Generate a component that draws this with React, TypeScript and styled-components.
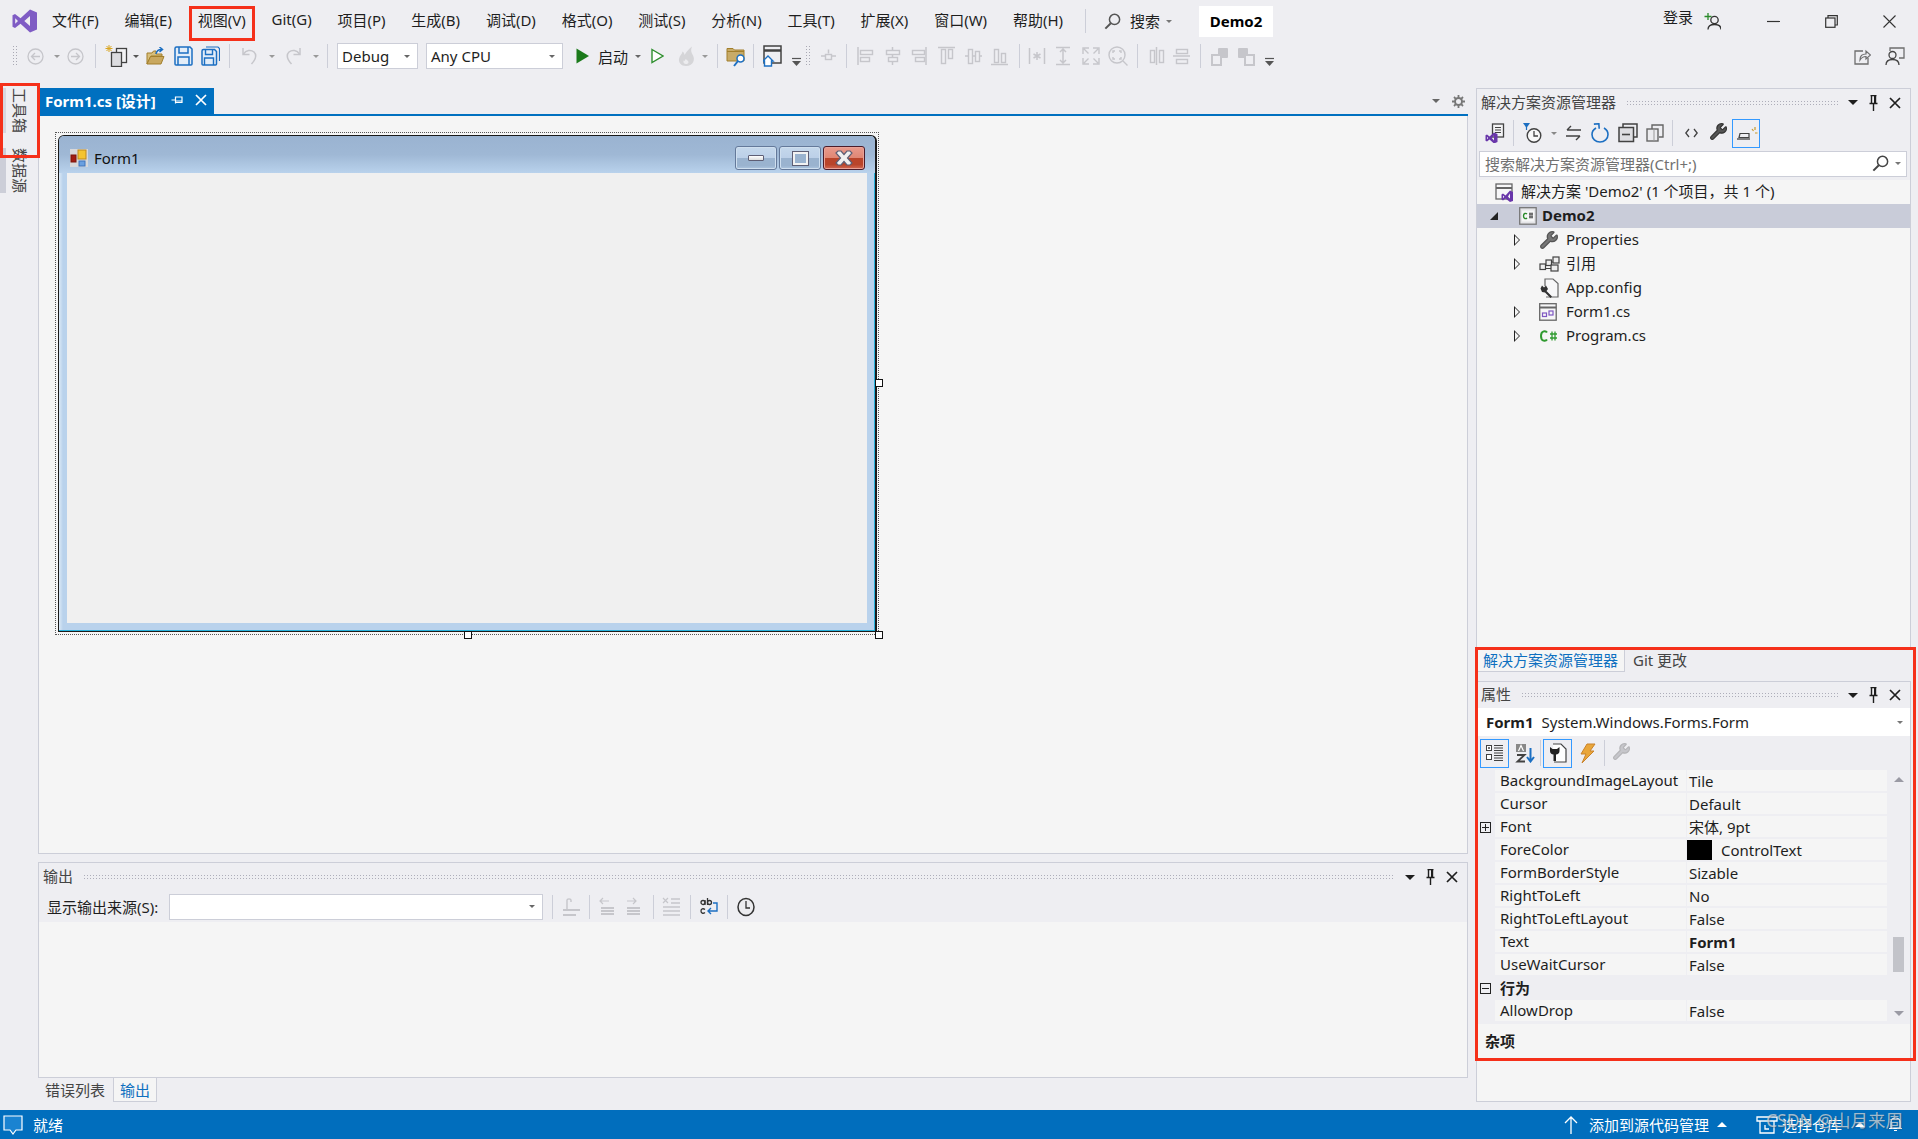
import type {ReactNode} from 'react';
import styled, {createGlobalStyle} from 'styled-components';
import {Wrench} from 'lucide-react';

const FONT = '"Noto Sans", "Noto Sans CJK SC", sans-serif';
const GREY = '#c6c6cb';
const DARK = '#424242';
const BLUE = '#1c6fc2';
const LINE = '#ccced8';
const PANE = '#f5f5f5';
const BAR = '#eeeef2';

const GlobalStyle = createGlobalStyle`
  html, body { margin: 0; padding: 0; background: ${BAR}; }
  body { font-family: ${FONT}; font-size: 15px; color: #1e1e1e; }
`;

/* ---------- little drawings ---------- */

const Ico = ({w, h = w, children}: {w: number; h?: number; children: ReactNode}) => (
    <svg width={w} height={h} viewBox={`0 0 ${w} ${h}`} fill="none" style={{display: 'block'}}>{children}</svg>
);

const VsLogo = () => <Ico w={25} h={24}>
    <path fillRule="evenodd" fill="#7f5cc4" d="M18 .5 25 3.5V20.500L18 23.500 8.500 14.800 3 19 .5 17.700V6.300L3 5 8.500 9.200ZM18 7 12.300 12 18 17ZM3.200 9.200V14.800L6 12Z"/>
</Ico>;

const Circle = ({dir}: {dir: 'l' | 'r'}) => <Ico w={17}>
    <circle cx="8.500" cy="8.500" r="7.500" stroke={GREY} strokeWidth="1.300"/>
    <path d={dir === 'l' ? 'M13 8.500H5M8 5 4.500 8.500 8 12' : 'M4 8.500H12M9 5 12.500 8.500 9 12'} stroke={GREY} strokeWidth="1.300"/>
</Ico>;

const NewProject = () => <Ico w={23} h={22}>
    <path d="M4 0v7M.5 3.500h7M1.500 1l5 5M6.500 1l-5 5" stroke="#d9a520" strokeWidth="1"/>
    <rect x="11.500" y="3.500" width="10" height="14" fill="#f3f3f5" stroke={DARK} strokeWidth="1.300"/>
    <rect x="6.500" y="7.500" width="10" height="14" fill="#dcdce0" stroke={DARK} strokeWidth="1.300"/>
</Ico>;

const OpenFolder = () => <Ico w={19} h={19}>
    <path d="M1 6h5l1.500-2H10v3h6v2H5L1 17V6Z" fill="#d8bf7c" stroke="#a27f2c"/>
    <path d="M1 17 4.500 9.500H18L15 17Z" fill="#c9a860" stroke="#a27f2c"/>
    <path d="M10 7c.5-3 3-4.500 5.500-4.500M13.500 0l3 2.500-3 2.500" stroke={BLUE} strokeWidth="1.500"/>
</Ico>;

const Save = () => <Ico w={19} h={20}>
    <path d="M1 2.500C1 1.500 1.500 1 2.500 1H16L18 3V18C18 18.500 17.500 19 17 19H2C1.500 19 1 18.500 1 18Z" fill="#e3edf8" stroke={BLUE} strokeWidth="1.500"/>
    <path d="M5 1v6h9V1M4 19v-8h11v8" stroke={BLUE} strokeWidth="1.500"/>
</Ico>;

const SaveAll = () => <Ico w={19} h={20}>
    <path d="M5 1h12l1.500 1.500V15" stroke={BLUE} strokeWidth="1.200"/>
    <path d="M1 5C1 4 1.500 3.500 2.500 3.500H13.500L15.500 5.500V18C15.500 18.500 15 19 14.500 19H2C1.500 19 1 18.500 1 18Z" fill="#e3edf8" stroke={BLUE} strokeWidth="1.500"/>
    <path d="M4.500 3.500v5h7v-5M3.500 19v-7h9v7" stroke={BLUE} strokeWidth="1.400"/>
</Ico>;

const Undo = ({flip}: {flip?: boolean}) => <Ico w={17} h={18}>
    <g transform={flip ? 'matrix(-1 0 0 1 17 0)' : undefined} stroke={GREY} strokeWidth="1.500">
        <path d="M2 1v6.500h6.500"/>
        <path d="M2.500 7C5 3 10 2.500 13 5c3 3 2 7-2.500 12"/>
    </g>
</Ico>;

const PlayFilled = () => <Ico w={13} h={16}><path d="M.5.500 13 8 .5 15.500Z" fill="#1b7a1b"/></Ico>;
const PlayOutline = () => <Ico w={13} h={16}><path d="M1 1.500 12 8 1 14.500Z" fill="#fff" stroke="#2f8f2f" strokeWidth="1.400"/></Ico>;

const Fire = () => <Ico w={17} h={20}>
    <path d="M8 20C3 20 .5 16.500 1 13 1.500 9.500 4 8.500 4.500 5.500 6 6.500 6.500 8 6.500 9 8 7 9.500 4 14 .5 12.500 4 13 6 15 9.500 17 13 16 20 8 20Z" fill="#d5d5d8"/>
    <path d="M8 18C6 18 5 16.500 5.500 14.500 6.500 15 7 15 7.500 13 9 14 11 15.500 10.500 16.500 10 17.500 9 18 8 18Z" fill="#ececef"/>
</Ico>;

const FolderSearch = () => <Ico w={21} h={21}>
    <path d="M1 2.500h6l1.500 1.500H18v11H1Z" fill="#c8ab68" stroke="#a27f2c"/>
    <path d="M1 5.500h17" stroke="#a27f2c"/>
    <circle cx="14.500" cy="12.500" r="3.500" fill="#fff" stroke={BLUE} strokeWidth="1.500"/>
    <path d="M12 15 8 20" stroke={BLUE} strokeWidth="2"/>
</Ico>;

const WindowHome = () => <Ico w={19} h={22}>
    <rect x="1" y="1" width="17" height="17" stroke={DARK} strokeWidth="1.500" fill={BAR}/>
    <path d="M1 5.500h17" stroke={DARK} strokeWidth="2.500"/>
    <path d="M0 16 5 11 10 16H8.500V21H1.500V16Z" fill="#fff" stroke={BLUE} strokeWidth="1.400"/>
</Ico>;

const Overflow = () => <Ico w={9} h={22}>
    <path d="M0 13.500h9" stroke="#555" strokeWidth="1.200"/>
    <path d="M0 16h9L4.500 21Z" fill="#555"/>
</Ico>;

const Layout = ({d, rects}: {d: string; rects: number[][]}) => <Ico w={17} h={20}>
    <path d={d} stroke={GREY} strokeWidth="1.500"/>
    {rects.map((r, i) => <rect key={i} x={r[0] + .5} y={r[1] + .5} width={r[2]} height={r[3]} fill={BAR} stroke={GREY} strokeWidth="1.400"/>)}
</Ico>;

const Star = () => <Ico w={18} h={20}>
    <path d="M1.500 2v16M16.500 2v16M9 6v8M5.500 8l7 4M12.500 8l-7 4" stroke={GREY} strokeWidth="1.500"/>
</Ico>;
const Span = () => <Ico w={18} h={20}>
    <path d="M2 1.500h14M2 18.500h14M9 3v14M6 6l3-3 3 3M6 14l3 3 3-3" stroke={GREY} strokeWidth="1.500"/>
</Ico>;
const Fit = () => <Ico w={18}>
    <path d="M7 1H1V7M11 1H17V7M7 17H1V11M11 17H17V11M2 2 6.500 6.500M16 2 11.500 6.500M2 16 6.500 11.500M16 16 11.500 11.500" stroke={GREY} strokeWidth="1.400"/>
</Ico>;
const Zoom = () => <Ico w={20}>
    <circle cx="9" cy="9" r="8" stroke={GREY} strokeWidth="1.400"/>
    <path d="M5 7V5H7M11 5H13V7M5 11V13H7M11 13H13V11M15 15 19.500 19.500" stroke={GREY} strokeWidth="1.400"/>
</Ico>;
const Squares = ({flip}: {flip?: boolean}) => <Ico w={19}>
    <g transform={flip ? 'matrix(-1 0 0 1 19 0)' : undefined}>
        <rect x="8" y="1" width="10" height="10" fill={GREY} rx="1"/>
        <rect x="2" y="8" width="9" height="10" fill={BAR} stroke={GREY} strokeWidth="2"/>
    </g>
</Ico>;

const Share = () => <Ico w={17}>
    <path d="M9 3H1V16H14V10" stroke="#6e6e6e" strokeWidth="1.300"/>
    <path d="M6 12C6 8 8 6 12 6V3L16.500 7 12 11V8.500C9 8.500 7.500 9.500 6 12Z" fill={BAR} stroke="#6e6e6e" strokeWidth="1.200"/>
</Ico>;
const Feedback = () => <Ico w={20} h={18}>
    <path d="M5 4V1H19V11H14" stroke="#6e6e6e" strokeWidth="1.300"/>
    <circle cx="7.500" cy="8" r="3.500" stroke="#444" strokeWidth="1.300" fill={BAR}/>
    <path d="M1 18C1 14 4 12.500 7.500 12.500S14 14 14 18" stroke="#444" strokeWidth="1.300"/>
</Ico>;

const SearchGlass = ({color = '#555', w = 17}: {color?: string; w?: number}) => <Ico w={w}>
    <circle cx={w * .62} cy={w * .38} r={w * .3} stroke={color} strokeWidth="1.500"/>
    <path d={`M${w * .4} ${w * .6}L${w * .08} ${w * .92}`} stroke={color} strokeWidth="2"/>
</Ico>;

const PersonAdd = () => <Ico w={17}>
    <path d="M4 0v7M.5 3.500h7" stroke="#2a8a2a" strokeWidth="1.300"/>
    <circle cx="10.500" cy="7" r="3.700" stroke="#333" strokeWidth="1.300"/>
    <path d="M4 16.500C4 13 7 11.500 10.500 11.500S17 13 17 16.500" stroke="#333" strokeWidth="1.300"/>
</Ico>;

const WinMin = () => <Ico w={13}><path d="M0 6.500h13" stroke="#333" strokeWidth="1.200"/></Ico>;
const WinRestore = () => <Ico w={13}>
    <path d="M3 3V.7H12.300V10H10" stroke="#333" strokeWidth="1.200"/>
    <rect x=".7" y="3" width="9.300" height="9.300" stroke="#333" strokeWidth="1.200"/>
</Ico>;
const WinClose = () => <Ico w={13}><path d="M.5.500 12.500 12.500M12.500.500.5 12.500" stroke="#333" strokeWidth="1.100"/></Ico>;

const Gear = () => <Ico w={13}>
    <circle cx="6.500" cy="6.500" r="3.500" stroke="#777" strokeWidth="2"/>
    <path d="M6.500 0v2.500M6.500 10.500V13M0 6.500h2.500M10.500 6.500H13M2 2l1.800 1.800M9.200 9.200 11 11M11 2 9.200 3.800M3.800 9.200 2 11" stroke="#777" strokeWidth="1.800"/>
</Ico>;

const PinH = () => <Ico w={12}>
    <path d="M.5 6h4M4.500 2.500v7M4.500 3h6.500v5.500H4.500M4.500 7h6.500" stroke="#fff" strokeWidth="1.200"/>
</Ico>;

const CloseX = ({color = '#fff', w = 12}: {color?: string; w?: number}) => <Ico w={w}>
    <path d={`M1 1 ${w - 1} ${w - 1}M${w - 1} 1 1 ${w - 1}`} stroke={color} strokeWidth="1.700"/>
</Ico>;

const PinV = () => <Ico w={9} h={16}>
    <path d="M1.500.500h6M2.500 1v7M6.500 1v7M.5 8.500h8M4.500 9v7" stroke="#1e1e1e" strokeWidth="1.400"/>
    <rect x="5" y="1" width="2" height="7" fill="#1e1e1e"/>
</Ico>;

const VsSolution = () => <Ico w={20} h={20}>
    <rect x="7.500" y="1" width="11" height="13" fill="#f3f3f5" stroke={DARK} strokeWidth="1.300"/>
    <path d="M10 4.500h6M10 7h6M10 9.500h6" stroke={DARK}/>
    <path fillRule="evenodd" fill="#6936aa" d="M9 9.500 12.500 11V19L9 20.500 4.500 16.500 2 18.500.5 17.800V12.200L2 11.500 4.500 13.500ZM9 12.500 6.800 15 9 17.500ZM2 13.700V16.300L3.200 15Z"/>
</Ico>;

const History = () => <Ico w={19} h={21}>
    <path d="M0 0H7L3.500 5Z" fill={BLUE}/>
    <path d="M3.500 4v3" stroke={BLUE} strokeWidth="1.200"/>
    <circle cx="11" cy="12.500" r="6.800" fill="#f8f8f8" stroke={DARK} strokeWidth="1.400"/>
    <path d="M11 8v5h4" stroke={DARK} strokeWidth="1.300"/>
</Ico>;
const Sync = () => <Ico w={17} h={16}>
    <path d="M16 5H2M6 1 2 5" stroke={DARK} strokeWidth="1.400"/>
    <path d="M1 11H15M11 15 15 11" stroke={DARK} strokeWidth="1.400"/>
</Ico>;
const Refresh = () => <Ico w={18} h={20}>
    <path d="M5 5C2.500 6.500 1 9 1 11.500 1 16 4.500 19 9 19S17 16 17 11.500C17 9 15.500 6.500 13 5" stroke={BLUE} strokeWidth="1.600"/>
    <path d="M3 1H8V6" stroke={BLUE} strokeWidth="1.600" transform="rotate(-4 5 3)"/>
</Ico>;
const Collapse = () => <Ico w={20}>
    <path d="M5 5V1H19V14H15" stroke={DARK} strokeWidth="1.500"/>
    <rect x="1" y="4.500" width="14.500" height="14" fill="#dedee2" stroke={DARK} strokeWidth="1.500"/>
    <path d="M4 11.500h8" stroke={DARK} strokeWidth="1.600"/>
</Ico>;
const Copies = () => <Ico w={18}>
    <path d="M6 5V1H17V13H13" stroke="#666" strokeWidth="1.400"/>
    <rect x="1" y="5" width="11" height="12" fill="#ececef" stroke="#666" strokeWidth="1.400"/>
    <path d="M8 5v12" stroke="#999"/>
</Ico>;
const Code = () => <Ico w={13} h={12}>
    <path d="M4 2 .8 6 4 10M9 2 12.200 6 9 10" stroke={DARK} strokeWidth="1.300"/>
</Ico>;
const Brush = () => <Ico w={24} h={16}>
    <path d="M5 12.500h10V8.500H6Z" stroke={DARK} strokeWidth="1.200"/>
    <path d="M3 14h13" stroke={DARK} strokeWidth="1.300"/>
    <path d="M18 4 19.500 6M21 2v3M21 8h2.500" stroke="#c79a2b" strokeWidth="1.200"/>
</Ico>;

const SolutionFile = () => <Ico w={19}>
    <rect x="1" y="1" width="16" height="15" fill="#f7f7f8" stroke="#666" strokeWidth="1.300"/>
    <path d="M1 5h16" stroke="#666" strokeWidth="2"/>
    <path fillRule="evenodd" fill="#6936aa" d="M15 7.500 18 9V18L15 19 10.500 15.500 8 17.500 6.500 16.500V11.500L8 10.500 10.500 12.500ZM15 10.500 13 13.500 15 16ZM8 12.500V15.200L9.300 13.800Z"/>
</Ico>;
const CsProject = () => <Ico w={18}>
    <rect x=".7" y=".7" width="16.500" height="16.500" fill="#e4e4e7" stroke="#777" strokeWidth="1.300"/>
    <rect x="3" y="3.500" width="12" height="11" fill="#f6f6f7"/>
    <path d="M8 7C7 6 4.500 6 4.500 9S7 12 8 11" stroke="#2a8a2a" strokeWidth="1.400"/>
    <path d="M10 7h4M10 10h4M11 5.500v6M13 5.500v6" stroke={DARK}/>
</Ico>;
const References = () => <Ico w={21} h={16}>
    <rect x="1" y="8" width="5.500" height="5.500" stroke={DARK} strokeWidth="1.200" fill="#eee"/>
    <rect x="7" y="4" width="5.500" height="5.500" stroke={DARK} strokeWidth="1.200" fill="#eee"/>
    <rect x="14" y="1" width="6" height="6" stroke={DARK} strokeWidth="1.200" fill="#eee"/>
    <rect x="12" y="9" width="7" height="6" stroke={DARK} strokeWidth="1.200" fill="#eee"/>
    <path d="M6.500 12.500H12M12.500 6H14" stroke={DARK}/>
</Ico>;
const ConfigFile = () => <Ico w={20}>
    <path d="M6 8V1H14L19 5.500V19H7" fill="#f7f7f8" stroke="#666" strokeWidth="1.200"/>
    <path d="M3 7.500 5 9.500 7 7.500 9 11 7.500 13 13 18.500 11.500 20 6 14.500 3 14 1.500 10.500Z" fill="#333"/>
</Ico>;
const FormFile = () => <Ico w={18}>
    <rect x=".7" y=".7" width="16.500" height="16.500" fill="#f6f6f7" stroke="#666" strokeWidth="1.300"/>
    <path d="M.7 4.500h16.500" stroke="#666" strokeWidth="2"/>
    <rect x="3.500" y="10" width="4" height="3.500" stroke="#7e57c2" strokeWidth="1.200"/>
    <rect x="10" y="8" width="4" height="4" stroke="#7e57c2" strokeWidth="1.200"/>
</Ico>;
const CsFile = () => <Ico w={19} h={14}>
    <path d="M8 3.500C7 1.800 2 1 2 7S7 12.200 8 10.500" stroke="#2f9a2f" strokeWidth="2"/>
    <path d="M11 5h7M11 9h7M13 2.500v9M16 2.500v9" stroke="#2f9a2f" strokeWidth="1.300"/>
</Ico>;

const Categorized = () => <Ico w={18} h={19}>
    <rect x=".5" y="1.500" width="5" height="5" fill="#fff" stroke={DARK}/>
    <path d="M2 4h2M3 3v2M2 13h2M3 12v2" stroke={DARK}/>
    <rect x=".5" y="10.500" width="5" height="5" fill="#fff" stroke={DARK}/>
    <path d="M8 1.500h9M8 4h9M8 6.500h9M8 9h9M8 11.500h9M8 14h9M8 16.500h9" stroke={DARK}/>
</Ico>;
const AzSort = () => <Ico w={20} h={20}>
    <rect x="1" y="1" width="10" height="8" fill="#888"/>
    <path d="M3.500 8 6 2.500 8.500 8" stroke="#fff" strokeWidth="1.200"/>
    <path d="M2 12H9.500L2.500 18.500H10" stroke={DARK} strokeWidth="1.800"/>
    <path d="M15.500 5V18M12 14 15.500 18.500 19 14" stroke={BLUE} strokeWidth="2"/>
</Ico>;
const PropPage = () => <Ico w={19} h={20}>
    <path d="M5 1H13L18 6V19H6" fill="#fff" stroke="#444" strokeWidth="1.200"/>
    <path d="M2 4V8C2 10 3.500 11.500 5.500 11.500V18H8V11.500C10 11.500 11.500 10 11.500 8V4L9 6H4.500Z" fill="#222"/>
</Ico>;
const Bolt = () => <Ico w={17} h={21}>
    <path d="M8 1H16L11 8H15L3 20 7 11H2Z" fill="#e9a63a" stroke="#c9822a"/>
</Ico>;

const FormGlyph = () => <Ico w={18}>
    <rect width="18" height="18" fill="#d8d8da"/>
    <rect x="8" y="1" width="8" height="9" fill="#f4c430" stroke="#c08a1a"/>
    <rect x="1" y="6" width="5" height="7" fill="#a31d12" stroke="#7a140c"/>
    <rect x="9" y="12" width="6" height="5" fill="#6aa0e0" stroke="#3f74bd"/>
</Ico>;

const XGlyph = () => <Ico w={18} h={16}>
    <path d="M1 3 3 1H6L9 4.500 12 1H15L17 3 12.500 8 17 13 15 15H12L9 11.500 6 15H3L1 13 5.500 8Z" fill="#f0f0f0" stroke="#5e5e74" strokeWidth="1.200"/>
</Ico>;

const ArrowUp = () => <Ico w={14} h={18}><path d="M7 1V18M1 7 7 1 13 7" stroke="#fff" strokeWidth="1.300"/></Ico>;
const Bubble = () => <Ico w={20} h={20}>
    <path d="M1 1H19V15H13L10 19 7 15H1Z" fill="#1a83d1" stroke="#fff" strokeWidth="1.200"/>
</Ico>;
const RepoBox = () => <Ico w={22} h={18}>
    <path d="M1 1H21V5H1ZM4 5V17H18V5" stroke="#fff" strokeWidth="1.300"/>
    <path d="M9 9V13H13" stroke="#fff" strokeWidth="1.300"/>
</Ico>;
const Bell = () => <Ico w={13} h={15}>
    <path d="M2 11V5C2 2 4 1 6.500 1S11 2 11 5V11ZM0 11.500H13M5 13.500H8" stroke="#fff" strokeWidth="1.200"/>
</Ico>;

const OutWrap = () => <Ico w={18} h={20}>
    <path d="M5 12V3C5 1.500 9 1.500 9 3V5" stroke={GREY} strokeWidth="1.400"/>
    <path d="M1 13h17" stroke={GREY} strokeWidth="2"/>
    <path d="M1 18h13" stroke={GREY} strokeWidth="2"/>
</Ico>;
const OutIndent = ({dir}: {dir: 'l' | 'r'}) => <Ico w={16} h={20}>
    <path d={dir === 'l' ? 'M10 4H1M4 1 1 4 4 7' : 'M2 4H11M8 1 11 4 8 7'} stroke={GREY} strokeWidth="1.200"/>
    <path d="M2 11h13M2 14h13M2 17h13" stroke={GREY} strokeWidth="2"/>
</Ico>;
const OutClear = () => <Ico w={19} h={20}>
    <path d="M1 1 6 6M6 1 1 6" stroke={GREY} strokeWidth="1.200"/>
    <path d="M9 2h9M9 6h9M1 10h17M1 14h17M1 18h17" stroke={GREY} strokeWidth="1.500"/>
</Ico>;
const OutWordWrap = () => <Ico w={19} h={19}>
    <circle cx="3" cy="5.500" r="2" stroke="#333" strokeWidth="1.300"/>
    <path d="M5 3v5" stroke="#333" strokeWidth="1.300"/>
    <circle cx="9.500" cy="5.500" r="2" stroke="#333" strokeWidth="1.300"/>
    <path d="M7.500 1v7" stroke="#333" strokeWidth="1.300"/>
    <path d="M5 12.500C3 11 1 12 1 14S3 17 5 15.500" stroke="#333" strokeWidth="1.300"/>
    <path d="M13 6H17V14H8M11 11 8 14 11 17" stroke={BLUE} strokeWidth="1.400"/>
</Ico>;
const OutClock = () => <Ico w={18} h={20}>
    <ellipse cx="9" cy="10" rx="8" ry="8.500" fill="#ececef" stroke="#333" strokeWidth="1.500"/>
    <path d="M9 4V11H13" stroke="#333" strokeWidth="1.300"/>
</Ico>;

/* ---------- page ---------- */

const Page = styled.div`
  position: relative;
  width: 1918px;
  height: 1139px;
  overflow: hidden;
  display: flex;
  flex-direction: column;
  background: ${BAR};
`;

const TitleBar = styled.div`
  height: 42px;
  display: flex;
  align-items: center;
  flex: none;
`;

const LogoSlot = styled.div`
  margin-left: 12px;
`;

const Menu = styled.nav`
  display: flex;
  gap: 25.800px;
  margin-left: 15px;
  padding-bottom: 4px;
  white-space: nowrap;
`;

const MenuSep = styled.div`
  width: 1px;
  height: 24px;
  background: ${LINE};
  margin: 0 18px 0 22px;
`;

const SearchLabel = styled.span`
  margin-left: 9px;
  padding-bottom: 2px;
`;

const ProjectName = styled.div`
  width: 74px;
  height: 31px;
  margin-left: 27px;
  background: #fff;
  display: flex;
  align-items: center;
  justify-content: center;
  font-weight: 700;
  font-size: 15px;
  color: #000;
`;

const SignIn = styled.span`
  margin-left: auto;
  margin-bottom: 9px;
`;

const WinButtons = styled.div`
  display: flex;
  align-items: center;
  margin-left: 46px;
  margin-right: 22px;
  gap: 45px;
`;

const Caret = styled.i<{$color?: string; $size?: number; $up?: boolean}>`
  display: block;
  width: 0;
  height: 0;
  flex: none;
  border-left: ${p => p.$size ?? 4}px solid transparent;
  border-right: ${p => p.$size ?? 4}px solid transparent;
  border-top: ${p => (p.$up ? 0 : (p.$size ?? 4))}px solid ${p => p.$color ?? '#777'};
  border-bottom: ${p => (p.$up ? (p.$size ?? 4) : 0)}px solid ${p => p.$color ?? '#777'};
`;

const ToolBar = styled.div`
  height: 46px;
  flex: none;
  display: flex;
  align-items: flex-start;
  padding-right: 13px;
  white-space: nowrap;
`;

const ToolRow = styled.div`
  height: 28px;
  display: flex;
  align-items: center;
  width: 100%;
`;

const Tool = styled.span<{$m: number}>`
  display: block;
  flex: none;
  margin-left: ${p => p.$m}px;
`;

const Sep = styled.i<{$h?: number}>`
  display: block;
  width: 1px;
  height: ${p => p.$h ?? 24}px;
  background: ${LINE};
`;

const DotGrip = styled.i`
  display: block;
  width: 6px;
  height: 22px;
  background-image: radial-gradient(#a9a9b4 .9px, transparent 1px);
  background-size: 3px 3px;
`;

const Combo = styled.div<{$w: number}>`
  width: ${p => p.$w}px;
  height: 26px;
  box-sizing: border-box;
  background: #fff;
  border: 1px solid ${LINE};
  display: flex;
  align-items: center;
  justify-content: space-between;
  padding: 0 7px 0 4px;
`;

const RightTools = styled.div`
  margin-left: auto;
  display: flex;
  gap: 14px;
  align-items: center;
`;

const Workspace = styled.div`
  flex: 1;
  min-height: 0;
  display: flex;
`;

const LeftRail = styled.aside`
  width: 38px;
  flex: none;
  display: flex;
  flex-direction: column;
  align-items: flex-start;
  gap: 15px;
`;

const RailTab = styled.div<{$light?: boolean}>`
  height: 45px;
  width: 30px;
  box-sizing: border-box;
  border-left: 6px solid ${p => (p.$light ? LINE : '#d7d8e0')};
  padding-left: 4px;
  writing-mode: vertical-rl;
  text-orientation: sideways;
  font-size: 15px;
  line-height: 20px;
  color: #444;
`;

const Center = styled.div`
  width: 1430px;
  flex: none;
  display: flex;
  flex-direction: column;
  padding-bottom: 8px;
  box-sizing: border-box;
`;

const DocTabs = styled.div`
  height: 28px;
  flex: none;
  box-sizing: border-box;
  border-bottom: 2px solid #0070c0;
  display: flex;
  align-items: center;
  padding-right: 3px;
`;

const DocTab = styled.div`
  height: 26px;
  width: 174px;
  margin-left: 2px;
  box-sizing: border-box;
  padding: 0 0 2px 5px;
  background: #0070c0;
  color: #fff;
  font-weight: 700;
  display: flex;
  align-items: center;
  white-space: nowrap;
`;

const DocTabIcons = styled.div`
  display: flex;
  align-items: center;
  gap: 12px;
  margin-left: 15px;
`;

const DocTabEnd = styled.div`
  margin-left: auto;
  display: flex;
  align-items: center;
  gap: 12px;
`;

const DesignArea = styled.main`
  flex: 1;
  min-height: 0;
  box-sizing: border-box;
  background: ${PANE};
  border: 1px solid ${LINE};
  border-top: 0;
  padding: 16px 0 0 16px;
`;

const SelectFrame = styled.div`
  position: relative;
  width: 824px;
  height: 503px;
  box-sizing: border-box;
  padding: 2px 1px 2px 2px;
  border: 1px dotted #555;
`;

const Handle = styled.i<{$pos: 'right' | 'bottom' | 'corner'}>`
  position: absolute;
  width: 8px;
  height: 8px;
  box-sizing: border-box;
  background: #fff;
  border: 1.500px solid #111;
  ${p => (p.$pos === 'right' ? 'right: -5px; top: 246px;' : '')}
  ${p => (p.$pos === 'bottom' ? 'left: 408px; bottom: -5px;' : '')}
  ${p => (p.$pos === 'corner' ? 'right: -5px; bottom: -5px;' : '')}
`;

const FormWindow = styled.div`
  height: 100%;
  box-sizing: border-box;
  border-style: solid;
  border-color: #1a1a1a;
  border-width: 1px 2px 1px 1px;
  border-radius: 6px 6px 0 0;
  display: flex;
  flex-direction: column;
  background: #b9d2ec;
`;

const FormTitle = styled.div`
  height: 37px;
  flex: none;
  box-sizing: border-box;
  display: flex;
  align-items: center;
  padding: 7px 10px 0 11px;
  border-radius: 5px 5px 0 0;
  background: linear-gradient(#9ab3d1 0%, #9fb8d5 50%, #b9d2ec 100%);
  font-size: 15px;
  color: #111;
`;

const FormName = styled.span`
  margin-left: 6px;
  padding-bottom: 1px;
`;

const GlassButtons = styled.div`
  margin-left: auto;
  display: flex;
  gap: 2px;
`;

const Glass = styled.div<{$close?: boolean}>`
  width: 42px;
  height: 24px;
  box-sizing: border-box;
  border: 1px solid ${p => (p.$close ? '#4b1c2a' : '#64799a')};
  border-radius: 3px;
  box-shadow: inset 0 0 0 1px ${p => (p.$close ? '#e9a297' : '#cfdfef')};
  display: flex;
  align-items: center;
  justify-content: center;
  background: ${p => (p.$close
        ? 'linear-gradient(#e89a8d 0%, #e08774 48%, #b9442a 49%, #b9442a 80%, #d26a55 100%)'
        : 'linear-gradient(#c5d8ec 0%, #bcd0e8 48%, #9ab3cf 49%, #9ab3cf 85%, #aec6e0 100%)')};
`;

const MinGlyph = styled.i`
  display: block;
  width: 16px;
  height: 6px;
  box-sizing: border-box;
  background: linear-gradient(#fff, #ddd);
  border: 1px solid #5e5e74;
  border-radius: 1px;
`;

const MaxGlyph = styled.i`
  display: block;
  width: 17px;
  height: 15px;
  box-sizing: border-box;
  background: #9ab3cf;
  border: 3px solid #f2f2f2;
  outline: 1px solid #5e5e74;
  outline-offset: -1px;
`;

const FormBody = styled.div`
  flex: 1;
  display: flex;
  padding: 0 7px 7px 8px;
  border-right: 1px solid #27b2dc;
  border-bottom: 1px solid #27b2dc;
  background: linear-gradient(90deg, #dbe9f6 0, #b9d2ec 4px, #b9d2ec 100%);
`;

const FormClient = styled.div`
  flex: 1;
  background: #f0f0f0;
`;

const PanelBox = styled.section`
  box-sizing: border-box;
  border: 1px solid ${LINE};
  display: flex;
  flex-direction: column;
  background: ${BAR};
`;

const PanelHead = styled.div<{$h: number}>`
  height: ${p => p.$h}px;
  flex: none;
  box-sizing: border-box;
  display: flex;
  align-items: center;
  padding: 0 9px 0 4px;
  color: #444;
  white-space: nowrap;
`;

const PanelTitle = styled.span`
  padding-bottom: 3px;
`;

const HeadGrip = styled.i`
  flex: 1;
  height: 6px;
  margin: 0 10px;
  background-image: radial-gradient(#aeaeba .9px, transparent 1px);
  background-size: 3px 3px;
`;

const HeadControls = styled.div`
  display: flex;
  align-items: center;
  gap: 11px;
`;

const OutputBox = styled(PanelBox)`
  margin-top: 8px;
  height: 216px;
  flex: none;
`;

const OutputBar = styled.div`
  height: 31px;
  flex: none;
  display: flex;
  align-items: center;
  white-space: nowrap;
`;

const OutputLabel = styled.span`
  margin-left: 8px;
  width: 122px;
  flex: none;
`;

const OutputPane = styled.div`
  flex: 1;
  background: ${PANE};
`;

const BottomTabs = styled.div`
  height: 24px;
  flex: none;
  display: flex;
  align-items: stretch;
`;

const BottomTab = styled.div<{$active?: boolean; $ml?: number}>`
  display: flex;
  align-items: center;
  margin-left: ${p => p.$ml ?? 0}px;
  padding: 0 6px;
  box-sizing: border-box;
  white-space: nowrap;
  color: ${p => (p.$active ? '#0e70c0' : '#444')};
  background: ${p => (p.$active ? PANE : 'transparent')};
  border: 1px solid ${p => (p.$active ? LINE : 'transparent')};
  border-top: 0;
`;

const RightCol = styled.div`
  width: 435px;
  margin-left: 8px;
  flex: none;
  display: flex;
  flex-direction: column;
  padding-bottom: 8px;
  box-sizing: border-box;
`;

const ExplorerBox = styled(PanelBox)`
  height: 560px;
  flex: none;
  border-bottom: 0;
`;

const SolutionBar = styled.div`
  height: 34px;
  flex: none;
  display: flex;
  align-items: center;
`;

const ToggleBtn = styled.div<{$w?: number}>`
  width: ${p => p.$w ?? 28}px;
  height: 29px;
  box-sizing: border-box;
  border: 1px solid #3399ff;
  display: flex;
  align-items: center;
  justify-content: center;
`;

const SearchBox = styled.div`
  height: 26px;
  flex: none;
  margin: 1px 3px 3px 2px;
  box-sizing: border-box;
  border: 1px solid ${LINE};
  background: #fff;
  display: flex;
  align-items: center;
  padding: 0 5px 2px 5px;
  color: #717171;
  white-space: nowrap;
`;

const SearchEnd = styled.div`
  margin-left: auto;
  display: flex;
  align-items: center;
  gap: 6px;
`;

const Tree = styled.div`
  flex: 1;
  background: ${PANE};
`;

const TreeRow = styled.div<{$pad: number; $selected?: boolean}>`
  height: 24px;
  display: flex;
  align-items: center;
  padding-left: ${p => p.$pad}px;
  white-space: nowrap;
  background: ${p => (p.$selected ? '#c9ccd9' : 'transparent')};
`;

const TreeArrow = styled.span<{$w: number}>`
  width: ${p => p.$w}px;
  flex: none;
  display: flex;
`;

const OpenTri = styled.i`
  display: block;
  width: 0;
  height: 0;
  border-left: 8px solid transparent;
  border-bottom: 8px solid #222;
`;

const ClosedTri = styled.i`
  display: block;
  width: 0;
  height: 0;
  border-top: 6px solid transparent;
  border-bottom: 6px solid transparent;
  border-left: 6px solid #222;
  position: relative;
  &::after {
    content: '';
    position: absolute;
    left: -5px;
    top: -4px;
    border-top: 4px solid transparent;
    border-bottom: 4px solid transparent;
    border-left: 4px solid ${PANE};
  }
`;

const TreeText = styled.span<{$m: number; $bold?: boolean}>`
  margin-left: ${p => p.$m}px;
  padding-bottom: 3px;
  font-weight: ${p => (p.$bold ? 700 : 400)};
`;

const TabStrip = styled.div`
  height: 24px;
  flex: none;
  display: flex;
  align-items: stretch;
`;

const StripTab = styled.div<{$active?: boolean}>`
  display: flex;
  align-items: center;
  box-sizing: border-box;
  padding: 0 ${p => (p.$active ? 6 : 7)}px;
  white-space: nowrap;
  color: ${p => (p.$active ? '#0e70c0' : '#444')};
  background: ${p => (p.$active ? PANE : 'transparent')};
  border: 1px solid ${p => (p.$active ? LINE : 'transparent')};
  border-top: 0;
`;

const PropsBox = styled(PanelBox)`
  margin-top: 9px;
  flex: 1;
  min-height: 0;
`;

const ObjectRow = styled.div`
  height: 28px;
  flex: none;
  background: #fff;
  display: flex;
  align-items: center;
  padding: 0 7px 0 9px;
  white-space: nowrap;
`;

const ObjectName = styled.b`
  margin-right: 8px;
`;

const ObjectEnd = styled.span`
  margin-left: auto;
`;

const PropsBar = styled.div`
  height: 34px;
  flex: none;
  display: flex;
  align-items: center;
  padding-left: 3px;
`;

const PropsGrid = styled.div`
  height: 253px;
  flex: none;
  display: flex;
`;

const GridRows = styled.div`
  flex: 1;
  min-width: 0;
`;

const PropRow = styled.div`
  height: 23px;
  display: grid;
  grid-template-columns: 17px 191px 1fr;
  column-gap: 1px;
  background: ${BAR};
  white-space: nowrap;
`;

const Gutter = styled.div`
  display: flex;
  align-items: center;
  justify-content: center;
`;

const PropName = styled.div`
  height: 21px;
  background: ${PANE};
  padding-left: 5px;
  line-height: 21px;
`;

const PropValue = styled.div<{$bold?: boolean}>`
  height: 21px;
  background: ${PANE};
  padding-left: 2px;
  display: flex;
  align-items: center;
  font-weight: ${p => (p.$bold ? 700 : 400)};
`;

const Swatch = styled.i`
  width: 25px;
  height: 20px;
  margin: 0 9px 0 -2px;
  background: #000;
  display: block;
`;

const CategoryName = styled.div`
  grid-column: 2 / 4;
  padding-left: 5px;
  font-weight: 700;
  line-height: 22px;
`;

const PlusBox = styled.i<{$minus?: boolean}>`
  display: block;
  width: 11px;
  height: 11px;
  box-sizing: border-box;
  border: 1px solid #222;
  background:
    linear-gradient(#222, #222) center / 7px 1px no-repeat
    ${p => (p.$minus ? '' : ', linear-gradient(#222, #222) center / 1px 7px no-repeat')};
`;

const ScrollCol = styled.div`
  width: 23px;
  flex: none;
  display: flex;
  flex-direction: column;
  align-items: center;
  padding: 7px 0 7px;
  box-sizing: border-box;
`;

const Thumb = styled.div`
  width: 11px;
  height: 35px;
  flex: none;
  margin-top: 155px;
  background: #c2c3c9;
`;

const ScrollEnd = styled.div`
  margin-top: auto;
`;

const DescPane = styled.div`
  flex: 1;
  background: ${PANE};
  border-top: 1px solid ${BAR};
  padding: 6px 8px;
  font-weight: 700;
  line-height: 22px;
`;

const StatusBar = styled.footer`
  height: 29px;
  flex: none;
  background: #016ebd;
  color: #fff;
  display: flex;
  align-items: center;
  padding-left: 3px;
  white-space: nowrap;
`;

const StatusText = styled.span<{$m: number}>`
  margin-left: ${p => p.$m}px;
`;

const StatusRight = styled.div`
  margin-left: auto;
  display: flex;
  align-items: center;
  padding-right: 16px;
`;

const Watermark = styled.div`
  position: absolute;
  right: 15px;
  bottom: 7px;
  font-size: 17.500px;
  line-height: 24px;
  color: rgba(215, 215, 215, .75);
  text-shadow: 1px 1px 1px rgba(60, 60, 60, .3);
  white-space: nowrap;
`;

const RedMark = styled.div<{$x: number; $y: number; $w: number; $h: number}>`
  position: absolute;
  left: ${p => p.$x}px;
  top: ${p => p.$y}px;
  width: ${p => p.$w}px;
  height: ${p => p.$h}px;
  box-sizing: border-box;
  border: 3px solid #f5301a;
  pointer-events: none;
`;

/* ---------- data ---------- */

const MENU = ['文件(F)', '编辑(E)', '视图(V)', 'Git(G)', '项目(P)', '生成(B)', '调试(D)', '格式(O)', '测试(S)', '分析(N)', '工具(T)', '扩展(X)', '窗口(W)', '帮助(H)'];

const MAIN_TOOLS: [number, ReactNode][] = [
    [12, <DotGrip/>],
    [9, <Circle dir="l"/>],
    [10, <Caret $size={3.500} $color="#999"/>],
    [7, <Circle dir="r"/>],
    [11, <Sep/>],
    [9, <NewProject/>],
    [5, <Caret $size={3.500} $color="#555"/>],
    [7, <OpenFolder/>],
    [9, <Save/>],
    [8, <SaveAll/>],
    [9, <Sep/>],
    [11, <Undo/>],
    [11, <Caret $size={3.500} $color="#999"/>],
    [10, <Undo flip/>],
    [11, <Caret $size={3.500} $color="#999"/>],
    [8, <Sep/>],
    [9, <Combo $w={81}>Debug<Caret $size={3.500} $color="#666"/></Combo>],
    [8, <Combo $w={137}>Any CPU<Caret $size={3.500} $color="#666"/></Combo>],
    [13, <PlayFilled/>],
    [9, <span>启动</span>],
    [7, <Caret $size={3.500} $color="#666"/>],
    [10, <PlayOutline/>],
    [14, <Fire/>],
    [7, <Caret $size={3.500} $color="#999"/>],
    [9, <Sep/>],
    [8, <FolderSearch/>],
    [6, <Sep/>],
    [9, <WindowHome/>],
    [10, <Overflow/>],
    [4, <DotGrip/>],
    [9, <Layout d="M1 10h15M8.500 3.500v4" rects={[[5, 8, 6, 5]]}/>],
    [9, <Sep/>],
    [10, <Layout d="M1 1v18" rects={[[3, 4, 12, 4], [3, 11, 9, 4]]}/>],
    [10, <Layout d="M8.500 1v18" rects={[[2, 4, 13, 4], [4, 11, 9, 4]]}/>],
    [9, <Layout d="M16 1v18" rects={[[2, 4, 12, 4], [5, 11, 9, 4]]}/>],
    [11, <Layout d="M0 1.500h17" rects={[[3, 3, 4, 14], [10, 3, 4, 9]]}/>],
    [10, <Layout d="M0 10h17" rects={[[3, 3, 4, 14], [10, 5, 4, 10]]}/>],
    [9, <Layout d="M0 18.500h17" rects={[[3, 3, 4, 13], [10, 7, 4, 9]]}/>],
    [11, <Sep/>],
    [8, <Star/>],
    [8, <Span/>],
    [10, <Fit/>],
    [8, <Zoom/>],
    [9, <Sep/>],
    [10, <Layout d="M8.500 1v18" rects={[[2, 4, 4, 12], [11, 4, 4, 12]]}/>],
    [8, <Layout d="M0 10h17" rects={[[3, 3, 11, 4], [3, 13, 11, 4]]}/>],
    [10, <Sep/>],
    [9, <Squares/>],
    [8, <Squares flip/>],
    [9, <Overflow/>],
];

const OUTPUT_TOOLS: [number, ReactNode][] = [
    [9, <Sep/>],
    [9, <OutWrap/>],
    [9, <Sep/>],
    [9, <OutIndent dir="l"/>],
    [10, <OutIndent dir="r"/>],
    [12, <Sep/>],
    [8, <OutClear/>],
    [9, <Sep/>],
    [9, <OutWordWrap/>],
    [8, <Sep/>],
    [9, <OutClock/>],
];

const SOLUTION_TOOLS: [number, ReactNode][] = [
    [8, <VsSolution/>],
    [8, <Sep $h={26}/>],
    [9, <History/>],
    [9, <Caret $size={3.500} $color="#888"/>],
    [8, <Sync/>],
    [9, <Refresh/>],
    [9, <Collapse/>],
    [8, <Copies/>],
    [8, <Sep $h={26}/>],
    [12, <Code/>],
    [11, <Wrench size={19} color="#333" fill="#555" strokeWidth={1.500}/>],
    [4, <ToggleBtn><Brush/></ToggleBtn>],
];

type Prop = {name: string; value?: ReactNode; bold?: boolean; box?: 'plus' | 'minus'; category?: boolean};

const PROPS: Prop[] = [
    {name: 'BackgroundImageLayout', value: 'Tile'},
    {name: 'Cursor', value: 'Default'},
    {name: 'Font', value: '宋体, 9pt', box: 'plus'},
    {name: 'ForeColor', value: <><Swatch/>ControlText</>},
    {name: 'FormBorderStyle', value: 'Sizable'},
    {name: 'RightToLeft', value: 'No'},
    {name: 'RightToLeftLayout', value: 'False'},
    {name: 'Text', value: 'Form1', bold: true},
    {name: 'UseWaitCursor', value: 'False'},
    {name: '行为', box: 'minus', category: true},
    {name: 'AllowDrop', value: 'False'},
];

const Tools = ({items}: {items: [number, ReactNode][]}) => <>
    {items.map(([m, node], i) => <Tool key={i} $m={m}>{node}</Tool>)}
</>;

const PanelControls = () => <HeadControls>
    <Caret $size={5} $color="#1e1e1e"/>
    <PinV/>
    <CloseX color="#1e1e1e"/>
</HeadControls>;

const App = () => {
    return <Page>
        <GlobalStyle/>

        <TitleBar>
            <LogoSlot><VsLogo/></LogoSlot>
            <Menu>{MENU.map(m => <span key={m}>{m}</span>)}</Menu>
            <MenuSep/>
            <SearchGlass/>
            <SearchLabel>搜索</SearchLabel>
            <Tool $m={6}><Caret $size={3.500}/></Tool>
            <ProjectName>Demo2</ProjectName>
            <SignIn>登录</SignIn>
            <Tool $m={11}><PersonAdd/></Tool>
            <WinButtons>
                <WinMin/>
                <WinRestore/>
                <WinClose/>
            </WinButtons>
        </TitleBar>

        <ToolBar>
            <ToolRow>
                <Tools items={MAIN_TOOLS}/>
                <RightTools>
                    <Share/>
                    <Feedback/>
                </RightTools>
            </ToolRow>
        </ToolBar>

        <Workspace>
            <LeftRail>
                <RailTab>工具箱</RailTab>
                <RailTab $light>数据源</RailTab>
            </LeftRail>

            <Center>
                <DocTabs>
                    <DocTab>
                        Form1.cs [设计]
                        <DocTabIcons>
                            <PinH/>
                            <CloseX/>
                        </DocTabIcons>
                    </DocTab>
                    <DocTabEnd>
                        <Caret $size={4.500} $color="#666"/>
                        <Gear/>
                    </DocTabEnd>
                </DocTabs>

                <DesignArea>
                    <SelectFrame>
                        <FormWindow>
                            <FormTitle>
                                <FormGlyph/>
                                <FormName>Form1</FormName>
                                <GlassButtons>
                                    <Glass><MinGlyph/></Glass>
                                    <Glass><MaxGlyph/></Glass>
                                    <Glass $close><XGlyph/></Glass>
                                </GlassButtons>
                            </FormTitle>
                            <FormBody>
                                <FormClient/>
                            </FormBody>
                        </FormWindow>
                        <Handle $pos="right"/>
                        <Handle $pos="bottom"/>
                        <Handle $pos="corner"/>
                    </SelectFrame>
                </DesignArea>

                <OutputBox>
                    <PanelHead $h={28}>
                        <PanelTitle>输出</PanelTitle>
                        <HeadGrip/>
                        <PanelControls/>
                    </PanelHead>
                    <OutputBar>
                        <OutputLabel>显示输出来源(S):</OutputLabel>
                        <Combo $w={374}>
                            <span/>
                            <Caret $size={3.500} $color="#666"/>
                        </Combo>
                        <Tools items={OUTPUT_TOOLS}/>
                    </OutputBar>
                    <OutputPane/>
                </OutputBox>

                <BottomTabs>
                    <BottomTab>错误列表</BottomTab>
                    <BottomTab $active $ml={1}>输出</BottomTab>
                </BottomTabs>
            </Center>

            <RightCol>
                <ExplorerBox>
                    <PanelHead $h={27}>
                        <PanelTitle>解决方案资源管理器</PanelTitle>
                        <HeadGrip/>
                        <PanelControls/>
                    </PanelHead>
                    <SolutionBar>
                        <Tools items={SOLUTION_TOOLS}/>
                    </SolutionBar>
                    <SearchBox>
                        搜索解决方案资源管理器(Ctrl+;)
                        <SearchEnd>
                            <SearchGlass color="#444"/>
                            <Caret $size={3.500}/>
                        </SearchEnd>
                    </SearchBox>
                    <Tree>
                        <TreeRow $pad={18}>
                            <SolutionFile/>
                            <TreeText $m={7}>解决方案 'Demo2' (1 个项目，共 1 个)</TreeText>
                        </TreeRow>
                        <TreeRow $pad={13} $selected>
                            <TreeArrow $w={29}><OpenTri/></TreeArrow>
                            <CsProject/>
                            <TreeText $m={5} $bold>Demo2</TreeText>
                        </TreeRow>
                        <TreeRow $pad={37}>
                            <TreeArrow $w={25}><ClosedTri/></TreeArrow>
                            <Wrench size={20} color="#555" fill="#777" strokeWidth={1.500}/>
                            <TreeText $m={7}>Properties</TreeText>
                        </TreeRow>
                        <TreeRow $pad={37}>
                            <TreeArrow $w={25}><ClosedTri/></TreeArrow>
                            <References/>
                            <TreeText $m={6}>引用</TreeText>
                        </TreeRow>
                        <TreeRow $pad={37}>
                            <TreeArrow $w={25}/>
                            <ConfigFile/>
                            <TreeText $m={7}>App.config</TreeText>
                        </TreeRow>
                        <TreeRow $pad={37}>
                            <TreeArrow $w={25}><ClosedTri/></TreeArrow>
                            <FormFile/>
                            <TreeText $m={9}>Form1.cs</TreeText>
                        </TreeRow>
                        <TreeRow $pad={37}>
                            <TreeArrow $w={25}><ClosedTri/></TreeArrow>
                            <CsFile/>
                            <TreeText $m={8}>Program.cs</TreeText>
                        </TreeRow>
                    </Tree>
                </ExplorerBox>

                <TabStrip>
                    <StripTab $active>解决方案资源管理器</StripTab>
                    <StripTab>Git 更改</StripTab>
                </TabStrip>

                <PropsBox>
                    <PanelHead $h={26}>
                        <PanelTitle>属性</PanelTitle>
                        <HeadGrip/>
                        <PanelControls/>
                    </PanelHead>
                    <ObjectRow>
                        <ObjectName>Form1</ObjectName>
                        System.Windows.Forms.Form
                        <ObjectEnd><Caret $size={3.500} $color="#777"/></ObjectEnd>
                    </ObjectRow>
                    <PropsBar>
                        <ToggleBtn $w={29}><Categorized/></ToggleBtn>
                        <Tool $m={6}><AzSort/></Tool>
                        <Tool $m={5}><Sep $h={26}/></Tool>
                        <Tool $m={2}><ToggleBtn $w={29}><PropPage/></ToggleBtn></Tool>
                        <Tool $m={7}><Bolt/></Tool>
                        <Tool $m={8}><Sep $h={26}/></Tool>
                        <Tool $m={7}><Wrench size={19} color="#b5b5b8" fill="#c6c6cb" strokeWidth={1.500}/></Tool>
                    </PropsBar>
                    <PropsGrid>
                        <GridRows>
                            {PROPS.map(p => <PropRow key={p.name}>
                                <Gutter>{p.box && <PlusBox $minus={p.box === 'minus'}/>}</Gutter>
                                {p.category
                                    ? <CategoryName>{p.name}</CategoryName>
                                    : <>
                                        <PropName>{p.name}</PropName>
                                        <PropValue $bold={p.bold}>{p.value}</PropValue>
                                    </>}
                            </PropRow>)}
                        </GridRows>
                        <ScrollCol>
                            <Caret $up $size={5.500} $color="#9a9aa4"/>
                            <Thumb/>
                            <ScrollEnd><Caret $size={5.500} $color="#9a9aa4"/></ScrollEnd>
                        </ScrollCol>
                    </PropsGrid>
                    <DescPane>杂项</DescPane>
                </PropsBox>
            </RightCol>
        </Workspace>

        <StatusBar>
            <Bubble/>
            <StatusText $m={10}>就绪</StatusText>
            <StatusRight>
                <ArrowUp/>
                <StatusText $m={11}>添加到源代码管理</StatusText>
                <Tool $m={8}><Caret $up $size={5} $color="#fff"/></Tool>
                <Tool $m={29}><RepoBox/></Tool>
                <StatusText $m={4}>选择仓库</StatusText>
                <Tool $m={13}><Caret $up $size={5} $color="#fff"/></Tool>
                <Tool $m={24}><Bell/></Tool>
            </StatusRight>
        </StatusBar>

        <Watermark>CSDN @山月来周</Watermark>

        <RedMark $x={189} $y={6} $w={66} $h={35}/>
        <RedMark $x={0} $y={83} $w={40} $h={75}/>
        <RedMark $x={1475} $y={647} $w={441} $h={414}/>
    </Page>;
};

export default App;
